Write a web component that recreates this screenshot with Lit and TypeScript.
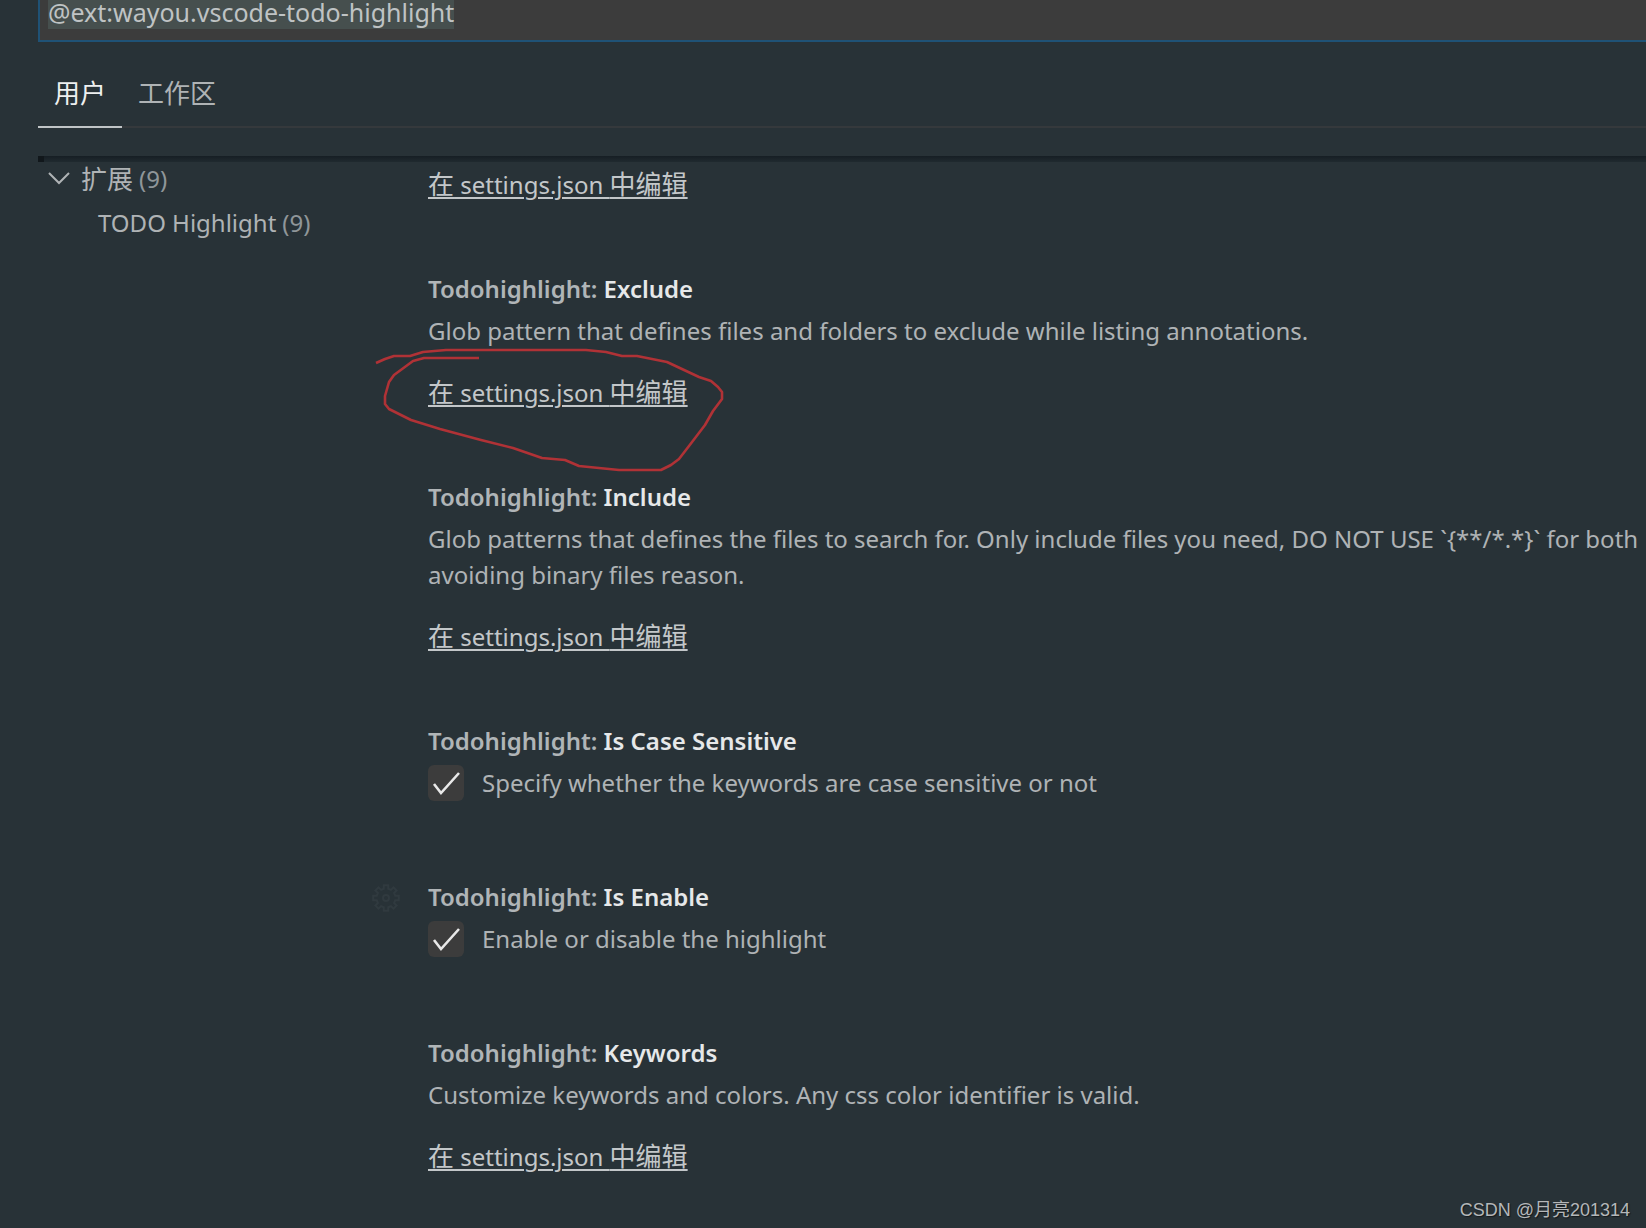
import { LitElement, html, css, svg, nothing } from "lit";
import { customElement, property, query } from "lit/decorators.js";

interface Setting {
  name: string;
  lines: string[];
  kind: "json" | "toggle";
  gear?: boolean;
  circled?: boolean;
}

const CATEGORY = "Todohighlight: ";

const SETTINGS: Setting[] = [
  {
    name: "Exclude",
    lines: ["Glob pattern that defines files and folders to exclude while listing annotations."],
    kind: "json",
    circled: true,
  },
  {
    name: "Include",
    lines: [
      "Glob patterns that defines the files to search for. Only include files you need, DO NOT USE `{**/*.*}` for both",
      "avoiding binary files reason.",
    ],
    kind: "json",
  },
  { name: "Is Case Sensitive", lines: ["Specify whether the keywords are case sensitive or not"], kind: "toggle" },
  { name: "Is Enable", lines: ["Enable or disable the highlight"], kind: "toggle", gear: true },
  { name: "Keywords", lines: ["Customize keywords and colors. Any css color identifier is valid."], kind: "json" },
];

/** Outline of an eight-toothed gear centred on 14,14. */
function gearPath(): string {
  const points: string[] = [];
  const teeth = 8;
  for (let i = 0; i < teeth; i++) {
    const base = (i / teeth) * Math.PI * 2 - Math.PI / 2;
    for (const [offset, radius] of [[-0.24, 9.5], [-0.17, 13], [0.17, 13], [0.24, 9.5]]) {
      points.push(`${(14 + Math.cos(base + offset) * radius).toFixed(2)} ${(14 + Math.sin(base + offset) * radius).toFixed(2)}`);
    }
  }
  return `M${points.join("L")}Z`;
}

@customElement("edit-json-link")
export class EditJsonLink extends LitElement {
  static styles = css`
    :host { display: block; line-height: 36px; }
    .link {
      color: #c3c7c9;
      text-decoration: underline;
      text-decoration-thickness: 2px;
      text-underline-offset: 3px;
    }
    .cjk { font-family: "Noto Sans CJK SC", sans-serif; font-size: 26px; line-height: 24px; }
  `;
  render() {
    return html`<a class="link" href="#settings.json"><span class="cjk">在</span> settings.json <span class="cjk">中编辑</span></a>`;
  }
}

@customElement("setting-item")
export class SettingItem extends LitElement {
  @property({ attribute: false }) setting!: Setting;

  static styles = css`
    :host { display: flex; }
    .gutter { flex: none; width: 56px; padding-top: 5px; box-sizing: border-box; }
    .gear { display: block; width: 28px; height: 28px; fill: none; stroke: #303a3f; stroke-width: 2; }
    .body { flex: 1; min-width: 0; }
    .title { margin: 0 0 6px; font-size: 24px; line-height: 36px; font-weight: 600; color: #b0b5b7; white-space: pre; }
    .name { color: #e6e8e9; }
    .text { margin: 0 0 26px; line-height: 36px; white-space: nowrap; overflow: hidden; }
    .option { display: flex; gap: 18px; line-height: 36px; padding-bottom: 10px; }
    .box {
      appearance: none;
      flex: none;
      width: 36px;
      height: 36px;
      margin: 0;
      border-radius: 6px;
      background: #3c3c3c;
    }
    .check { display: grid; grid-template: 36px / 36px; }
    .check > * { grid-area: 1 / 1; }
    .tick { width: 36px; height: 36px; fill: none; stroke: #e8e8e8; stroke-width: 2.6; pointer-events: none; visibility: hidden; }
    .box:checked + .tick { visibility: visible; }
    .marked { position: relative; }
    .scribble {
      position: absolute;
      left: -59px;
      top: -33px;
      width: 360px;
      height: 130px;
      fill: none;
      stroke: #b03236;
      stroke-width: 2.6;
      stroke-linejoin: round;
      pointer-events: none;
    }
  `;

  private renderScribble() {
    return html`<svg class="scribble" viewBox="370 342 360 130" aria-hidden="true">
      <path d="M377 363 L386 359 L395 356 L411 356 L424 352 L447 350 L587 350 L607 352 L623 356 L638 356 L668 362 L700 377 L712 381 L719 387 L723 392 L723 399 L714 411 L706 425 L690 446 L680 459 L672 465 L662 470 L620 470 L580 466 L566 460 L543 458 L514 448 L482 440 L441 429 L412 420 L390 409 L386 404 L386 396 L390 382 L395 375 L414 361 L425 358 L480 358" />
    </svg>`;
  }

  render() {
    const s = this.setting;
    const toggle = s.kind === "toggle";
    return html`
      <div class="gutter">
        ${s.gear
          ? html`<svg class="gear" viewBox="0 0 28 28" aria-hidden="true">${svg`<path d=${gearPath()} /><circle cx="14" cy="14" r="3" />`}</svg>`
          : nothing}
      </div>
      <div class="body">
        <h3 class="title">${CATEGORY}<span class="name">${s.name}</span></h3>
        ${toggle
          ? html`<label class="option">
              <span class="check">
                <input class="box" type="checkbox" checked />
                <svg class="tick" viewBox="0 0 36 36" aria-hidden="true"><path d="M6 19 L13 28 L31 8" /></svg>
              </span>
              <span>${s.lines[0]}</span>
            </label>`
          : html`<p class="text">${s.lines.map((line, i) => html`${i ? html`<br />` : nothing}${line}`)}</p>
              <div class="marked">
                <edit-json-link></edit-json-link>
                ${s.circled ? this.renderScribble() : nothing}
              </div>`}
      </div>
    `;
  }
}

@customElement("app-root")
export class AppRoot extends LitElement {
  @query(".search") private search!: HTMLInputElement;

  static styles = css`
    :host {
      display: flex;
      flex-direction: column;
      position: relative;
      box-sizing: border-box;
      min-height: 100vh;
      padding-left: 38px;
      overflow: hidden;
      background: #283237;
      color: #afb3b5;
      font-family: "Noto Sans", "Noto Sans CJK SC", sans-serif;
      font-size: 24px;
    }
    .search {
      flex: none;
      box-sizing: border-box;
      width: 100%;
      height: 50px;
      margin: -8px 0 0;
      padding: 0 8px 8px;
      border: 2px solid #1f5276;
      border-width: 0 0 2px 2px;
      outline: none;
      background: #3c3c3c;
      color: #bfc3c4;
      font: inherit;
      font-size: 25px;
      line-height: 40px;
    }
    .search::selection { background: #464f4e; color: #bfc3c4; }
    .tabs {
      display: flex;
      margin-top: 36px;
      border-bottom: 2px solid #35393c;
      height: 48px;
    }
    .tab {
      height: 50px;
      padding: 0 16px 20px;
      border: 0;
      border-bottom: 2px solid transparent;
      background: none;
      color: #afb3b5;
      font-family: "Noto Sans CJK SC", sans-serif;
      font-size: 26px;
      line-height: 28px;
      white-space: nowrap;
      box-sizing: border-box;
    }
    .active { border-bottom-color: #c0c4c6; color: #eef0f0; }
    .shadow {
      height: 6px;
      margin-top: 28px;
      background: linear-gradient(#161e24, #202a2f);
      border-left: 6px solid #11171b;
    }
    .columns { display: grid; grid-template-columns: 334px minmax(0, 1fr); }
    .row { display: flex; align-items: center; height: 56px; gap: 6px; white-space: nowrap; }
    .root { padding-left: 10px; height: 32px; }
    .leaf { padding-left: 60px; }
    .chevron { width: 22px; height: 22px; margin-right: 5px; fill: none; stroke: #afb3b5; stroke-width: 2; }
    .cjk { font-family: "Noto Sans CJK SC", sans-serif; font-size: 26px; line-height: 36px; }
    .count { color: #8f9699; }
    .list { display: grid; gap: 68px; padding-top: 5px; }
    .first { padding-left: 56px; }
    .watermark {
      position: absolute;
      right: 16px;
      bottom: 6px;
      color: #b4b7b9;
      font-family: "Liberation Sans", "Noto Sans CJK SC", sans-serif;
      font-size: 18px;
      line-height: 24px;
      text-shadow: 1px 1px 1px #14191c;
    }
  `;

  firstUpdated() {
    this.search.focus();
    this.search.select();
  }

  render() {
    return html`
      <input class="search" type="text" aria-label="搜索设置" spellcheck="false" value="@ext:wayou.vscode-todo-highlight" />
      <nav class="tabs">
        <button class="tab active">用户</button>
        <button class="tab">工作区</button>
      </nav>
      <div class="shadow"></div>
      <div class="columns">
        <aside>
          <div class="row root">
            <svg class="chevron" viewBox="0 0 22 22" aria-hidden="true"><path d="M1 6 L11 16 L21 6" /></svg>
            <span class="cjk">扩展</span><span class="count">(9)</span>
          </div>
          <div class="row leaf"><span>TODO Highlight</span><span class="count">(9)</span></div>
        </aside>
        <main class="list">
          <div class="first"><edit-json-link></edit-json-link></div>
          ${SETTINGS.map((s) => html`<setting-item .setting=${s}></setting-item>`)}
        </main>
      </div>
      <span class="watermark">CSDN @月亮201314</span>
    `;
  }
}
